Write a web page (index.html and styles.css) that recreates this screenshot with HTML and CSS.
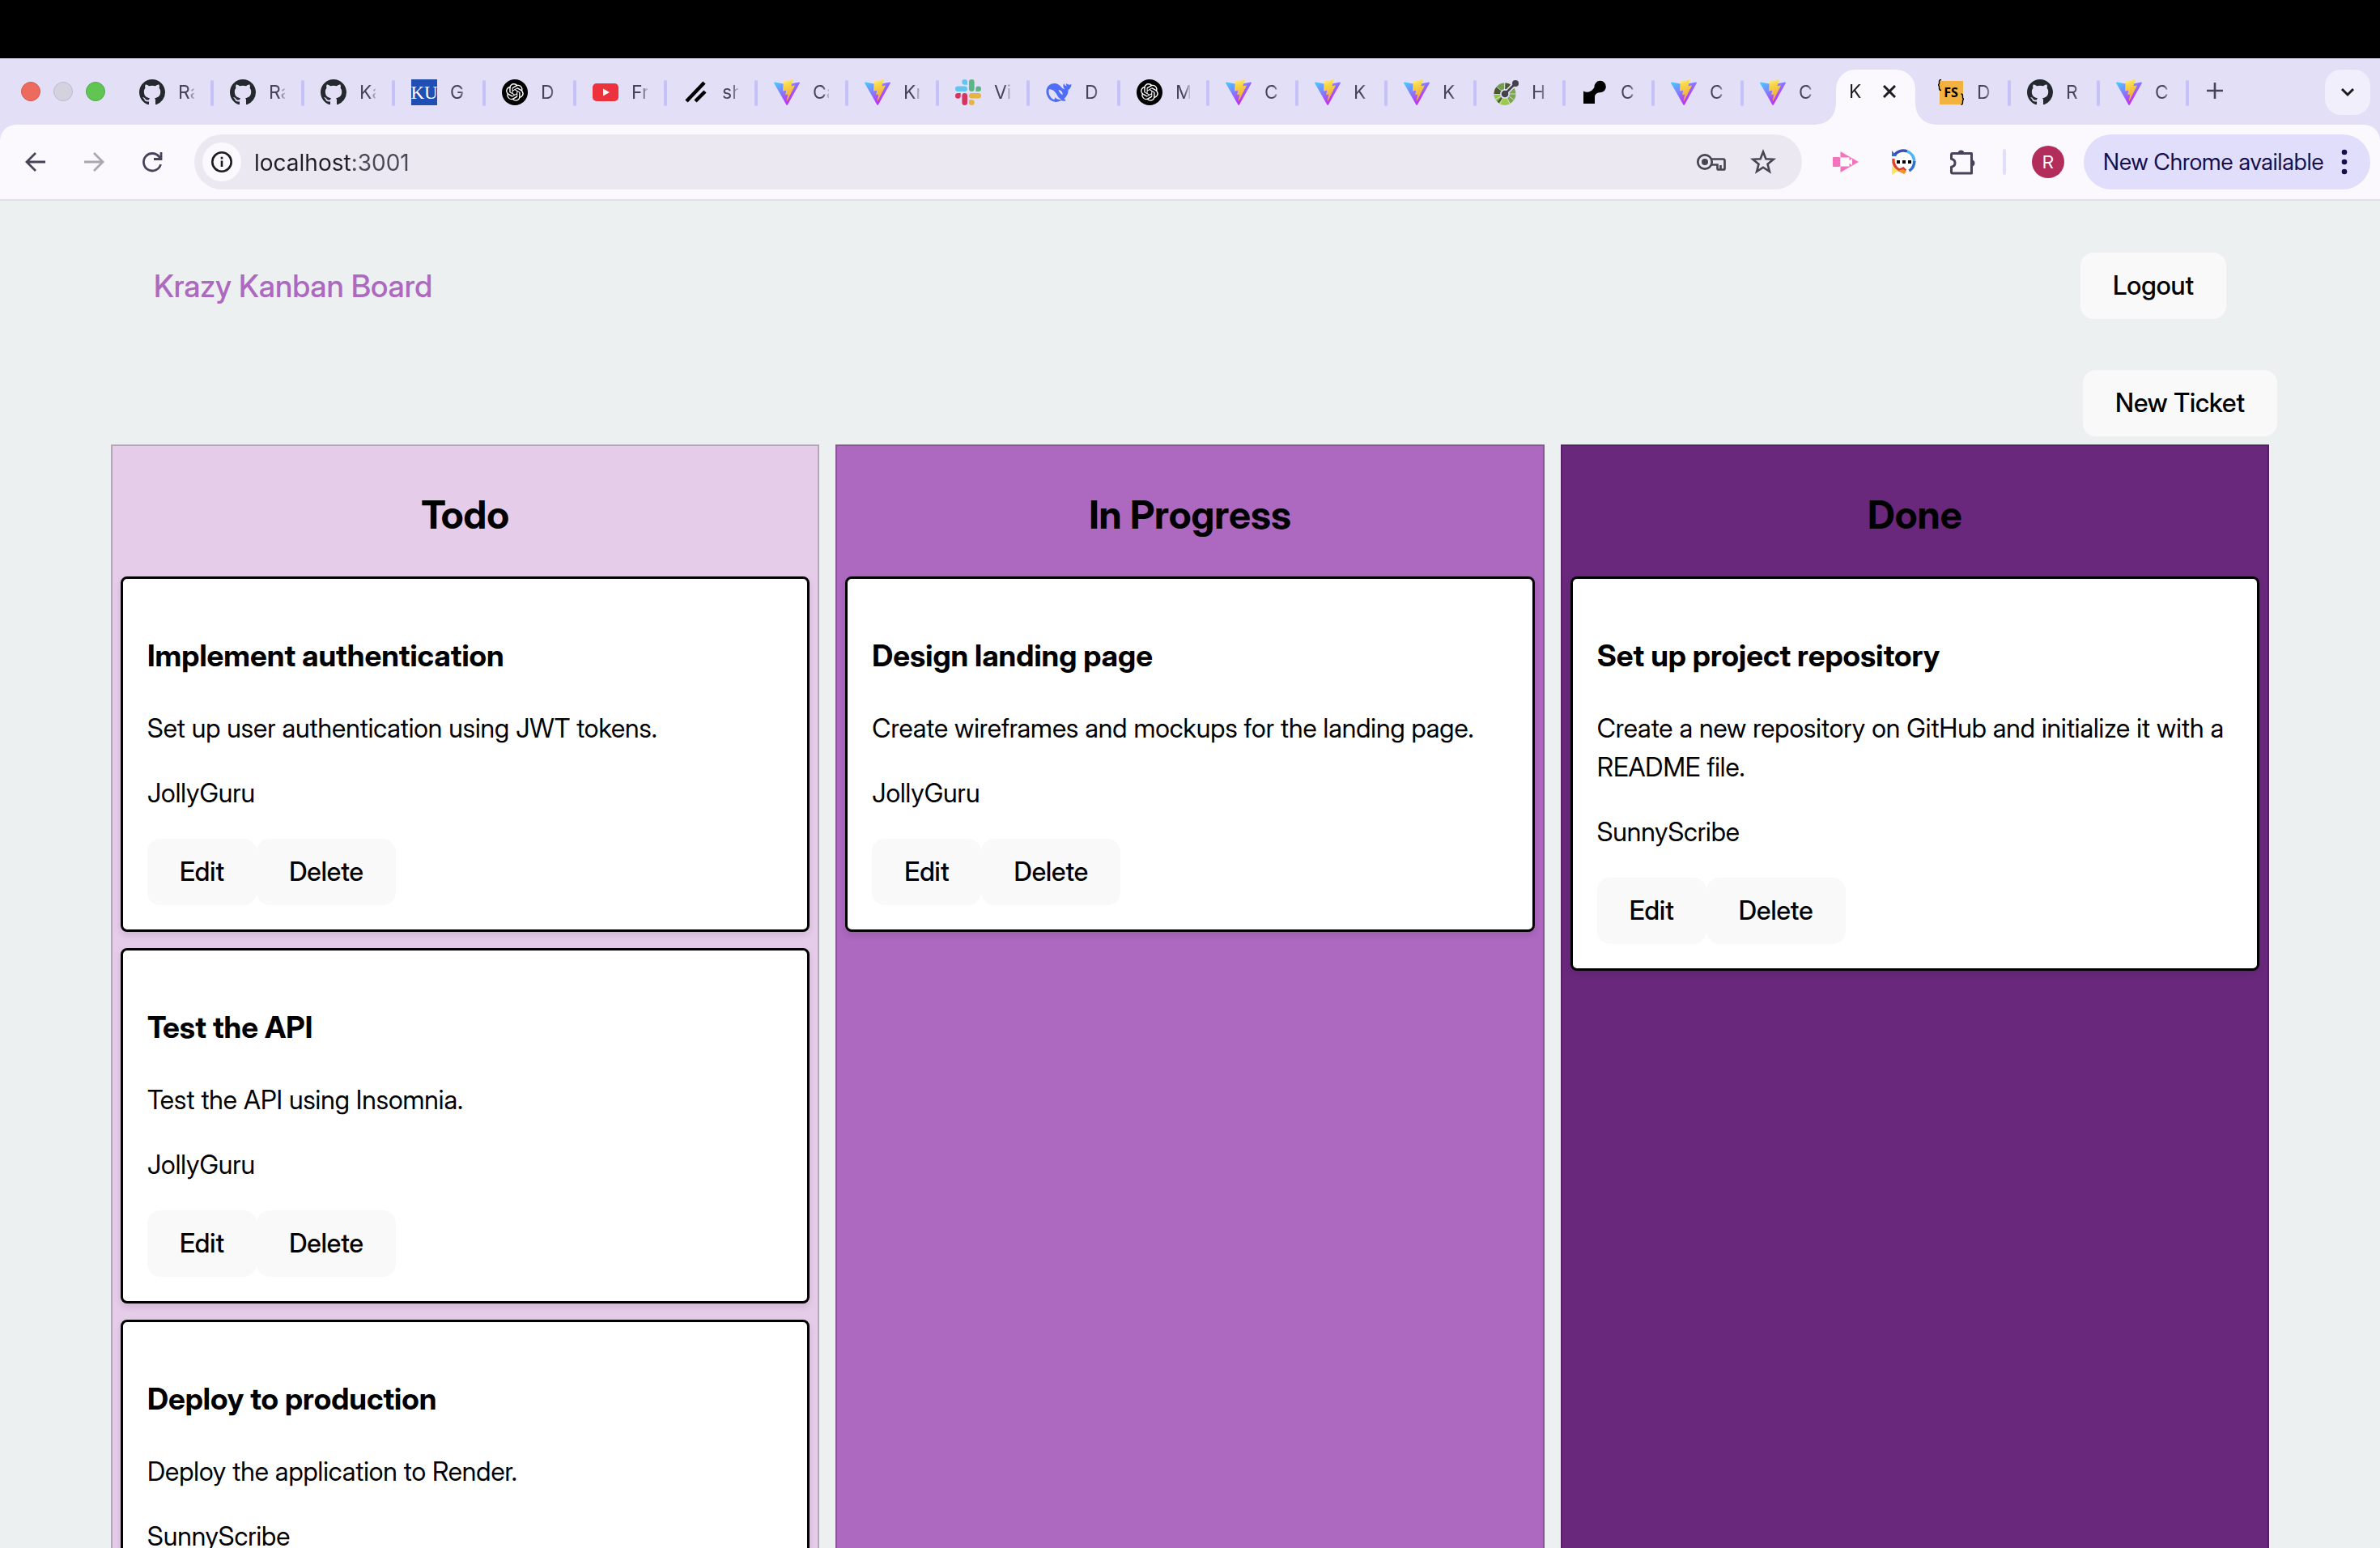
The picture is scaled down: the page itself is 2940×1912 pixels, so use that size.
FILE: index.html
```html
<!DOCTYPE html>
<html lang="en">
<head>
<meta charset="utf-8">
<title>Krazy Kanban Board</title>
<link rel="stylesheet" href="styles.css">
</head>
<body>
<svg class="defs" aria-hidden="true">
  <defs>
    <linearGradient id="vite-blue" x1="0" y1="0" x2="0.6" y2="0.8"><stop offset="0" stop-color="#41d1ff"/><stop offset="1" stop-color="#bd34fe"/></linearGradient>
    <linearGradient id="vite-gold" x1="0.4" y1="0" x2="0.6" y2="1"><stop offset="0" stop-color="#ffea83"/><stop offset="0.2" stop-color="#f9d94a"/><stop offset="1" stop-color="#f0a030"/></linearGradient>
  </defs>
  <symbol id="github" viewBox="0 0 16 16"><path fill="#24292f" d="M8 0C3.58 0 0 3.58 0 8c0 3.54 2.29 6.53 5.47 7.59.4.07.55-.17.55-.38 0-.19-.01-.82-.01-1.49-2.01.37-2.53-.49-2.69-.94-.09-.23-.48-.94-.82-1.13-.28-.15-.68-.52-.01-.53.63-.01 1.08.58 1.23.82.72 1.21 1.87.87 2.33.66.07-.52.28-.87.51-1.07-1.78-.2-3.64-.89-3.64-3.95 0-.87.31-1.59.82-2.15-.08-.2-.36-1.02.08-2.12 0 0 .67-.21 2.2.82.64-.18 1.32-.27 2-.27s1.36.09 2 .27c1.53-1.04 2.2-.82 2.2-.82.44 1.1.16 1.92.08 2.12.51.56.82 1.27.82 2.15 0 3.07-1.87 3.75-3.65 3.95.29.25.54.73.54 1.48 0 1.07-.01 1.93-.01 2.2 0 .21.15.46.55.38A8.01 8.01 0 0 0 16 8c0-4.42-3.58-8-8-8z"/></symbol>
  <symbol id="openai" viewBox="0 0 32 32"><circle cx="16" cy="16" r="16"/><path fill="#fff" transform="translate(5 5) scale(.91)" d="M22.2819 9.8211a5.9847 5.9847 0 0 0-.5157-4.9108 6.0462 6.0462 0 0 0-6.5098-2.9A6.0651 6.0651 0 0 0 4.9807 4.1818a5.9847 5.9847 0 0 0-3.9977 2.9 6.0462 6.0462 0 0 0 .7427 7.0966 5.98 5.98 0 0 0 .511 4.9107 6.051 6.051 0 0 0 6.5146 2.9001A5.9847 5.9847 0 0 0 13.2599 24a6.0557 6.0557 0 0 0 5.7718-4.2058 5.9894 5.9894 0 0 0 3.9977-2.9001 6.0557 6.0557 0 0 0-.7475-7.0729zm-9.022 12.6081a4.4755 4.4755 0 0 1-2.8764-1.0408l.1419-.0804 4.7783-2.7582a.7948.7948 0 0 0 .3927-.6813v-6.7369l2.02 1.1686a.071.071 0 0 1 .038.052v5.5826a4.504 4.504 0 0 1-4.4945 4.4944zm-9.6607-4.1254a4.4708 4.4708 0 0 1-.5346-3.0137l.142.0852 4.783 2.7582a.7712.7712 0 0 0 .7806 0l5.8428-3.3685v2.3324a.0804.0804 0 0 1-.0332.0615L9.74 19.9502a4.4992 4.4992 0 0 1-6.1408-1.6464zM2.3408 7.8956a4.485 4.485 0 0 1 2.3655-1.9728V11.6a.7664.7664 0 0 0 .3879.6765l5.8144 3.3543-2.0201 1.1685a.0757.0757 0 0 1-.071 0l-4.8303-2.7865A4.504 4.504 0 0 1 2.3408 7.872zm16.5963 3.8558L13.1038 8.364 15.1192 7.2a.0757.0757 0 0 1 .071 0l4.8303 2.7913a4.4944 4.4944 0 0 1-.6765 8.1042v-5.6772a.79.79 0 0 0-.407-.667zm2.0107-3.0231l-.142-.0852-4.7735-2.7818a.7759.7759 0 0 0-.7854 0L9.409 9.2297V6.8974a.0662.0662 0 0 1 .0284-.0615l4.8303-2.7866a4.4992 4.4992 0 0 1 6.6802 4.66zM8.3065 12.863l-2.02-1.1638a.0804.0804 0 0 1-.038-.0567V6.0742a4.4992 4.4992 0 0 1 7.3757-3.4537l-.142.0805L8.704 5.459a.7948.7948 0 0 0-.3927.6813zm1.0976-2.3654l2.602-1.4998 2.6069 1.4998v2.9994l-2.5974 1.4997-2.6067-1.4997Z"/></symbol>
  <symbol id="vite" viewBox="0 0 256 257"><path fill="url(#vite-blue)" d="M255.153 37.938L134.897 252.976c-2.483 4.44-8.862 4.466-11.382.048L.875 37.958c-2.746-4.814 1.371-10.646 6.827-9.67l120.385 21.517a6.537 6.537 0 0 0 2.322-.004l117.867-21.483c5.438-.991 9.574 4.796 6.877 9.62Z"/><path fill="url(#vite-gold)" d="M185.432.063L96.44 17.501a3.268 3.268 0 0 0-2.634 3.014l-5.474 92.456a3.268 3.268 0 0 0 3.997 3.378l24.777-5.718c2.318-.535 4.413 1.507 3.936 3.838l-7.361 36.047c-.495 2.426 1.782 4.5 4.151 3.78l15.304-4.649c2.372-.72 4.652 1.36 4.15 3.788l-11.698 56.621c-.732 3.542 3.979 5.473 5.943 2.437l1.313-2.028l72.516-144.72c1.215-2.423-.88-5.186-3.54-4.672l-25.505 4.922c-2.396.462-4.435-1.77-3.759-4.114l16.646-57.705c.677-2.35-1.37-4.583-3.769-4.113Z"/></symbol>
</svg>

<div class="menubar"></div>

<header class="tabstrip">
  <div class="lights"><i class="light close"></i><i class="light mini"></i><i class="light full"></i></div>
  <nav class="tabs">
    <a class="tab" href="#"><svg class="fav"><use href="#github"/></svg><span class="label">Ra</span></a>
    <a class="tab" href="#"><svg class="fav"><use href="#github"/></svg><span class="label">Ra</span></a>
    <a class="tab" href="#"><svg class="fav"><use href="#github"/></svg><span class="label">Ka</span></a>
    <a class="tab" href="#"><svg class="fav" viewBox="0 0 32 32"><rect width="32" height="32" fill="#1f4fb2"/><text class="ku" x="16" y="24" text-anchor="middle">KU</text></svg><span class="label">G</span></a>
    <a class="tab" href="#"><svg class="fav"><use href="#openai"/></svg><span class="label">D</span></a>
    <a class="tab" href="#"><svg class="fav" viewBox="0 0 32 32"><rect y="5" width="32" height="22" rx="5" fill="#ec323d"/><path d="M13 11.500v9l8-4.500z" fill="#fff"/></svg><span class="label">Fr</span></a>
    <a class="tab" href="#"><svg class="fav" viewBox="0 0 32 32"><path d="M4 27 26 4M15 27l12-12" stroke="#000" stroke-width="4.500" fill="none"/></svg><span class="label">sh</span></a>
    <a class="tab" href="#"><svg class="fav"><use href="#vite"/></svg><span class="label">Ca</span></a>
    <a class="tab" href="#"><svg class="fav"><use href="#vite"/></svg><span class="label">Kr</span></a>
    <a class="tab" href="#"><svg class="fav" viewBox="0 0 32 32"><g fill="#62c5ef"><rect y="8.500" width="15" height="6.600" rx="3.300"/><path d="M15 6.700h-3.300A3.350 3.350 0 1 1 15 3.300z"/></g><g fill="#5cb584"><rect x="17" width="6.600" height="15" rx="3.300"/><path d="M25.300 15.100v-3.300a3.350 3.350 0 1 1 3.300 3.300z"/></g><g fill="#d6355f"><rect x="8.400" y="17" width="6.600" height="15" rx="3.300"/><path d="M6.700 17v3.300A3.350 3.350 0 1 1 3.300 17z"/></g><g fill="#e6b345"><rect x="17" y="17" width="15" height="6.600" rx="3.300"/><path d="M17 25.300h3.300a3.350 3.350 0 1 1-3.300 3.300z"/></g></svg><span class="label">Vi</span></a>
    <a class="tab" href="#"><svg class="fav" viewBox="0 0 32 32"><path fill="#4f6ef7" d="M31.500 5.800c-2.300 1.800-4.300.6-6.300-.8-.7 1-.3 2.300.6 3.200-1.800.1-3-1.200-3.500-3.100-1.700 2.700-.7 5.300 1 7.200-3-.4-4.600-3.500-7-5.300C12.300 4.200 7.500 4.700 4 7.200.8 9.700-.2 14 .9 18.300c1.200 5 5.600 9.500 11.100 9.600 3 .1 4.800-.9 6.500-1.800 2.200.8 4.600 1 6.300-.2-.9-.6-1.800-1-2.300-1.900 3.200-3 5.300-6.500 5.100-10.800 2.200-1.200 4-4 3.900-7.400z"/><path fill="#e3dff6" d="M3.700 12.500c4.300-1 8.200 3.300 9.800 6.500 1.400 2.600 3 4.600 5.500 5.700-3.400.8-5.800-.8-7.800-2.500.2 1.800-.5 2.600-1.500 2.700C5.900 23.700 2.400 17.800 3.700 12.500zM15.500 13.300c2.600-.6 5.500 2.200 5.200 5.800-1.600-.3-3.900-2.700-5.200-5.800z"/></svg><span class="label">D</span></a>
    <a class="tab slim" href="#"><svg class="fav"><use href="#openai"/></svg><span class="label">M</span></a>
    <a class="tab slim" href="#"><svg class="fav"><use href="#vite"/></svg><span class="label">C</span></a>
    <a class="tab slim" href="#"><svg class="fav"><use href="#vite"/></svg><span class="label">K</span></a>
    <a class="tab slim" href="#"><svg class="fav"><use href="#vite"/></svg><span class="label">K</span></a>
    <a class="tab slim" href="#"><svg class="fav" viewBox="0 0 32 32"><circle cx="15" cy="18" r="9" fill="none" stroke="#7aa84e" stroke-width="9"/><g fill="none" stroke-width="9"><path d="M6 18a9 9 0 0 1 2.500-6.200" stroke="#4c5930"/><path d="M8.500 11.800A9 9 0 0 1 14 9" stroke="#6fa04a"/><path d="M15.500 9a9 9 0 0 1 4 1.200" stroke="#4c5930"/><path d="M10.500 26a9 9 0 0 0 9-.1" stroke="#9ccb4b"/><path d="M8 23.600A9 9 0 0 1 6 18.500" stroke="#93c84a"/><path d="M10.300 25.700 8.600 24.300" stroke="#4c5930"/></g><path d="M1 18.500h8M3 25l7-4M9 30l3.500-7M21 30l-3.500-7M26 25l-6-4M29 18h-8M14.500 4v9M4.500 9l6 5" stroke="#e3dff6" stroke-width=".8"/><circle cx="15" cy="18" r="6" fill="#e3dff6"/><path d="M15 18 28 5" stroke="#e3dff6" stroke-width="6"/><path d="M15 18 28 5" stroke="#44424c" stroke-width="2.600"/><circle cx="15" cy="18" r="4.300" fill="#44424c"/><circle cx="28" cy="5" r="4" fill="#44424c"/></svg><span class="label">H</span></a>
    <a class="tab slim" href="#"><svg class="fav" viewBox="0 0 32 32"><path d="M2 14.500C7 17.500 13 15 15.500 9.500A7.200 7.200 0 1 1 22 16.200C18.500 16.500 16 18.500 16 22v8H2z"/></svg><span class="label">C</span></a>
    <a class="tab slim" href="#"><svg class="fav"><use href="#vite"/></svg><span class="label">C</span></a>
    <a class="tab slim last" href="#"><svg class="fav"><use href="#vite"/></svg><span class="label">C</span></a>
    <div class="tab active"><span class="label">K</span><button class="x" aria-label="Close tab"><svg viewBox="0 0 16 16" width="16" height="16"><path d="M1 1l14 14M15 1 1 15" stroke="#1c1b22" stroke-width="3"/></svg></button></div>
    <a class="tab slim" href="#"><svg class="fav" viewBox="0 0 32 32"><rect x="2" y="2" width="29" height="29" fill="#f3b23f"/><path d="M4 .800Q1.500 0 1.500 3v2.500L.300 7l1.200 1.500V11q0 2.500 2.500 2.500M28.500 18q2 0 2 2.500V23l1.200 1.500-1.200 1.500v3q0 2-2 2.500" fill="none" stroke="#000" stroke-width="1.400"/><text class="fs" x="16" y="22" text-anchor="middle">FS</text></svg><span class="label">D</span></a>
    <a class="tab slim" href="#"><svg class="fav"><use href="#github"/></svg><span class="label">R</span></a>
    <a class="tab slim" href="#"><svg class="fav"><use href="#vite"/></svg><span class="label">C</span></a>
  </nav>
  <button class="newtab" aria-label="New tab"><svg viewBox="0 0 20 20" width="20" height="20"><path d="M10 0v20M0 10h20" stroke="#474459" stroke-width="2.600"/></svg></button>
  <button class="search" aria-label="Search tabs"><svg viewBox="0 0 18 12" width="18" height="12"><path d="M2 2l7 7 7-7" fill="none" stroke="#1c1b22" stroke-width="3"/></svg></button>
</header>

<div class="toolbar">
  <button class="tool" aria-label="Back"><svg viewBox="0 0 32 32"><path d="M28 16H6M16 5 5 16l11 11" fill="none" stroke="#474459" stroke-width="2.800"/></svg></button>
  <button class="tool" aria-label="Forward"><svg viewBox="0 0 32 32"><path d="M4 16h22M16 5l11 11-11 11" fill="none" stroke="#a9a7b0" stroke-width="2.800"/></svg></button>
  <button class="tool" aria-label="Reload"><svg viewBox="0 0 32 32"><path d="M26.500 19A10.700 10.700 0 1 1 24.500 9.500L27 12M27 4v8.500h-9" fill="none" stroke="#474459" stroke-width="2.800"/></svg></button>
  <div class="omnibox">
    <button class="info" aria-label="Site information"><svg viewBox="0 0 28 28" width="28" height="28"><circle cx="14" cy="14" r="11.700" fill="none" stroke="#1c1b22" stroke-width="2.600"/><path d="M14 12.500V20M14 7.800v2.700" stroke="#1c1b22" stroke-width="2.600"/></svg></button>
    <input class="url" type="text" value="localhost:3001" aria-label="Address">
    <svg class="act" viewBox="0 0 36 36"><circle cx="10" cy="18" r="8.700" fill="none" stroke="#474650" stroke-width="2.700"/><circle cx="10" cy="18" r="4" fill="#474650"/><path d="M18 14.500h14.500q2 0 2 2V26q0 1.500-1.500 1.500h-6q-1.500 0-1.500-1.500v-4.500H18M29.500 22v5" fill="none" stroke="#474650" stroke-width="2.700"/></svg>
    <svg class="act" viewBox="0 0 36 36"><path d="M18 5.500l3.400 8.700 9.300.6-7.200 5.900 2.400 9.100L18 24.700l-7.900 5.100 2.400-9.100-7.200-5.900 9.300-.6z" fill="none" stroke="#474650" stroke-width="2.600"/></svg>
  </div>
  <button class="tool" aria-label="Screen recorder"><svg viewBox="0 0 32 32"><path d="M9.500 3 32 16 9.500 29z" fill="#f274bc"/><rect y="10" width="9" height="12" rx="1" fill="#f274bc"/><path d="M9.500 10.500h11v4l3.500-3v9l-3.500-3v4h-11z" fill="#fff"/></svg></button>
  <button class="tool" aria-label="Chat extension"><svg viewBox="0 0 32 32"><circle cx="16" cy="15" r="12" fill="#fff"/><g fill="none" stroke-width="3.400"><path d="M4 8A13 13 0 0 1 20 3" stroke="#3b50b5"/><path d="M20 3a13 13 0 0 1 8.500 14" stroke="#4db4f5"/><path d="M28.800 15q0 8-6.500 12" stroke="#2f6fd0"/><path d="M3 12q-1 9 7 14l5-2 3 3" stroke="#d9442c"/></g><path d="M1 2v7h6z" fill="#2f6fd0"/><path d="M1 21v11l8-5z" fill="#ffe45a"/><path d="M8 27l7-2 4 3-3 3z" fill="#f5912d"/><path d="M7 14h4v4H7zM14 14h4v4h-4zM21 14h4v4h-4z"/></svg></button>
  <button class="tool" aria-label="Extensions"><svg viewBox="0 0 32 32"><path d="M4 5.500h23.500V30H4q-1.500 0-1.500-1.500v-6.300c6-1.500 6-8.500 0-10V7Q2.500 5.500 4 5.500z" fill="none" stroke="#474459" stroke-width="3" stroke-linejoin="round"/><path d="M10.500 4.500a4.200 4.200 0 0 1 8 0zM28.500 13.500a4.200 4.200 0 0 1 0 8z" fill="#474459"/></svg></button>
  <i class="divider"></i>
  <button class="avatar">R</button>
  <button class="chip"><span>New Chrome available</span><svg viewBox="0 0 8 32" width="8" height="32"><circle cx="4" cy="4" r="3.300"/><circle cx="4" cy="16" r="3.300"/><circle cx="4" cy="28" r="3.300"/></svg></button>
</div>

<main class="page">
  <div class="nav">
    <a class="brand" href="#">Krazy Kanban Board</a>
    <button class="btn">Logout</button>
  </div>
  <div class="board">
    <div class="create"><button class="btn">New Ticket</button></div>
    <div class="columns">
      <section class="column todo">
        <h2>Todo</h2>
        <article class="card"><h3>Implement authentication</h3><p>Set up user authentication using JWT tokens.</p><p>JollyGuru</p><div class="actions"><button class="btn">Edit</button><button class="btn">Delete</button></div></article>
        <article class="card"><h3>Test the API</h3><p>Test the API using Insomnia.</p><p>JollyGuru</p><div class="actions"><button class="btn">Edit</button><button class="btn">Delete</button></div></article>
        <article class="card"><h3>Deploy to production</h3><p>Deploy the application to Render.</p><p>SunnyScribe</p><div class="actions"><button class="btn">Edit</button><button class="btn">Delete</button></div></article>
      </section>
      <section class="column progress">
        <h2>In Progress</h2>
        <article class="card"><h3>Design landing page</h3><p>Create wireframes and mockups for the landing page.</p><p>JollyGuru</p><div class="actions"><button class="btn">Edit</button><button class="btn">Delete</button></div></article>
      </section>
      <section class="column done">
        <h2>Done</h2>
        <article class="card"><h3>Set up project repository</h3><p>Create a new repository on GitHub and initialize it with a README file.</p><p>SunnyScribe</p><div class="actions"><button class="btn">Edit</button><button class="btn">Delete</button></div></article>
      </section>
    </div>
  </div>
</main>
</body>
</html>
```
FILE: styles.css
```css
* { box-sizing: border-box; }

body {
  margin: 0;
  height: 100vh;
  overflow: hidden;
  background: #ecf0f1;
  color: #000;
  font-family: "Inter Display", Inter, sans-serif;
  font-size: 32px;
  line-height: 48px;
}

button {
  margin: 0;
  padding: 0;
  border: 0;
  background: none;
  color: inherit;
  font: inherit;
}

a { color: inherit; text-decoration: none; }
svg { display: block; flex: none; }
.defs { position: absolute; width: 0; height: 0; }

/* Browser frame */
.menubar { height: 72px; background: #000; }

.tabstrip {
  display: flex;
  height: 82px;
  padding-right: 12px;
  background: #e3dff6;
}

.lights {
  display: flex;
  gap: 16px;
  width: 150px;
  padding: 29px 0 0 26px;
}
.light { width: 24px; height: 24px; border-radius: 50%; }
.close { background: #ed6a5e; border: 1px solid #d65a4f; }
.mini { background: #d5d2e0; border: 1px solid #bdbac9; }
.full { background: #61c554; border: 1px solid #51ab46; }

.tabs { display: flex; }
.tab {
  position: relative;
  display: flex;
  align-items: center;
  gap: 16px;
  width: 112px;
  height: 84px;
  padding: 0 0 0 22px;
  color: #474459;
  font-family: Inter, sans-serif;
  font-size: 23px;
  line-height: 32px;
}
.tab::after {
  content: "";
  position: absolute;
  right: -2px;
  top: 27px;
  width: 4px;
  height: 32px;
  border-radius: 2px;
  background: #c5c2fa;
}
.tab.last::after { display: none; }
.slim { width: 110px; }
.fav { width: 32px; height: 32px; }
.ku { fill: #fff; font: 23px "Liberation Serif", serif; }
.fs { fill: #000; font: bold 16px "Open Sans", sans-serif; }
.label {
  width: 20px;
  overflow: hidden;
  white-space: nowrap;
  -webkit-mask-image: linear-gradient(90deg, #000 60%, rgba(0, 0, 0, .2));
  mask-image: linear-gradient(90deg, #000 60%, rgba(0, 0, 0, .2));
}
.slim .label { width: 18px; }
.tab.active {
  gap: 22px;
  width: 98px;
  height: 68px;
  margin: 14px 6px 0;
  padding: 0 0 14px 16px;
  border-radius: 24px 24px 0 0;
  background: #fbf9fe;
  color: #1c1b22;
}
.tab.active::before,
.tab.active::after {
  content: "";
  position: absolute;
  top: auto;
  bottom: 0;
  width: 24px;
  height: 24px;
  border-radius: 0;
}
.tab.active::before {
  left: -24px;
  background: radial-gradient(circle at 0 0, #e3dff6 23px, #fbf9fe 24px);
}
.tab.active::after {
  right: -24px;
  background: radial-gradient(circle at 100% 0, #e3dff6 23px, #fbf9fe 24px);
}

.newtab { width: 68px; height: 80px; display: grid; place-items: center; }
.search {
  display: grid;
  place-items: center;
  width: 56px;
  height: 56px;
  margin: 14px 0 0 auto;
  border-radius: 20px;
  background: #f2effd;
}

.toolbar {
  position: relative;
  display: flex;
  align-items: center;
  height: 94px;
  padding: 0 12px 0 8px;
  border-bottom: 2px solid #e2dfe9;
  background: #e3dff6;
  isolation: isolate;
}
.toolbar::before {
  content: "";
  position: absolute;
  z-index: -1;
  inset: 0;
  border-radius: 20px 20px 0 0;
  background: #fbf9fe;
}
.tool { display: grid; place-items: center; width: 72px; height: 68px; }
.tool svg { width: 32px; height: 32px; }

.omnibox {
  display: flex;
  flex: 1;
  align-items: center;
  gap: 32px;
  height: 68px;
  margin: 0 18px 0 16px;
  padding: 0 30px 0 10px;
  border-radius: 34px;
  background: #ebe8f2;
}
.info {
  display: grid;
  place-items: center;
  width: 48px;
  height: 48px;
  border-radius: 50%;
  background: #fbf9fe;
}
.url {
  flex: 1;
  min-width: 0;
  margin-left: -16px;
  padding: 1px 0 0;
  border: 0;
  outline: 0;
  background: linear-gradient(90deg, #1f1e24 120px, #4a4953 120px);
  -webkit-background-clip: text;
  background-clip: text;
  color: transparent;
  font: 28px/40px Inter, sans-serif;
}
.act { width: 36px; height: 36px; }
.act:last-child { margin-left: -4px; }

.divider { width: 4px; height: 32px; margin-left: 14px; border-radius: 2px; background: #e1defb; }
.avatar {
  width: 40px;
  height: 40px;
  margin-left: 32px;
  border-radius: 50%;
  background: #b32d5b;
  color: #fff;
  font-size: 22px;
  line-height: 40px;
}
.chip {
  display: flex;
  align-items: center;
  justify-content: space-between;
  width: 354px;
  height: 68px;
  margin-left: 24px;
  padding: 0 28px 0 24px;
  border-radius: 34px;
  background: #e1defc;
  color: #160f4d;
  font-size: 28px;
  line-height: 40px;
  white-space: nowrap;
}
.chip svg { fill: #160f4d; }

/* Kanban page */
.page { font-weight: 500; }
.nav {
  display: flex;
  align-items: center;
  justify-content: space-between;
  padding: 64px 190px 63px;
}
.brand { color: #ad68c0; font-size: 38px; line-height: 56px; }

.btn {
  padding: 19px 38px;
  border: 2px solid transparent;
  border-radius: 16px;
  background: #f9f9f9;
  background-clip: border-box;
  font-size: 32px;
  line-height: 40px;
}

.board { padding: 0 127px; }
.create { display: flex; justify-content: flex-end; }
.columns {
  display: grid;
  grid-template-columns: repeat(3, 1fr);
  gap: 20px;
  padding: 10px 10px 0;
}
.column {
  display: flex;
  flex-direction: column;
  gap: 20px;
  padding: 10px 10px 20px;
  border: 2px solid rgba(0, 0, 0, .2);
}
.todo { background-color: #e5cce9; }
.progress { background-color: #ad68bf; }
.done { background-color: #6a287d; }

h2 {
  margin: 39px 0 20px;
  font-size: 48px;
  line-height: 72px;
  text-align: center;
}
.card {
  padding: 30px;
  border: 3px solid #000;
  border-radius: 8px;
  background: #fff;
  box-shadow: 0 4px 8px rgba(0, 0, 0, .1);
}
h3 { margin: 37px 0 38px; font-size: 37px; line-height: 56px; }
p { margin: 0 0 32px; font-weight: 400; }
.actions { display: flex; }
```
